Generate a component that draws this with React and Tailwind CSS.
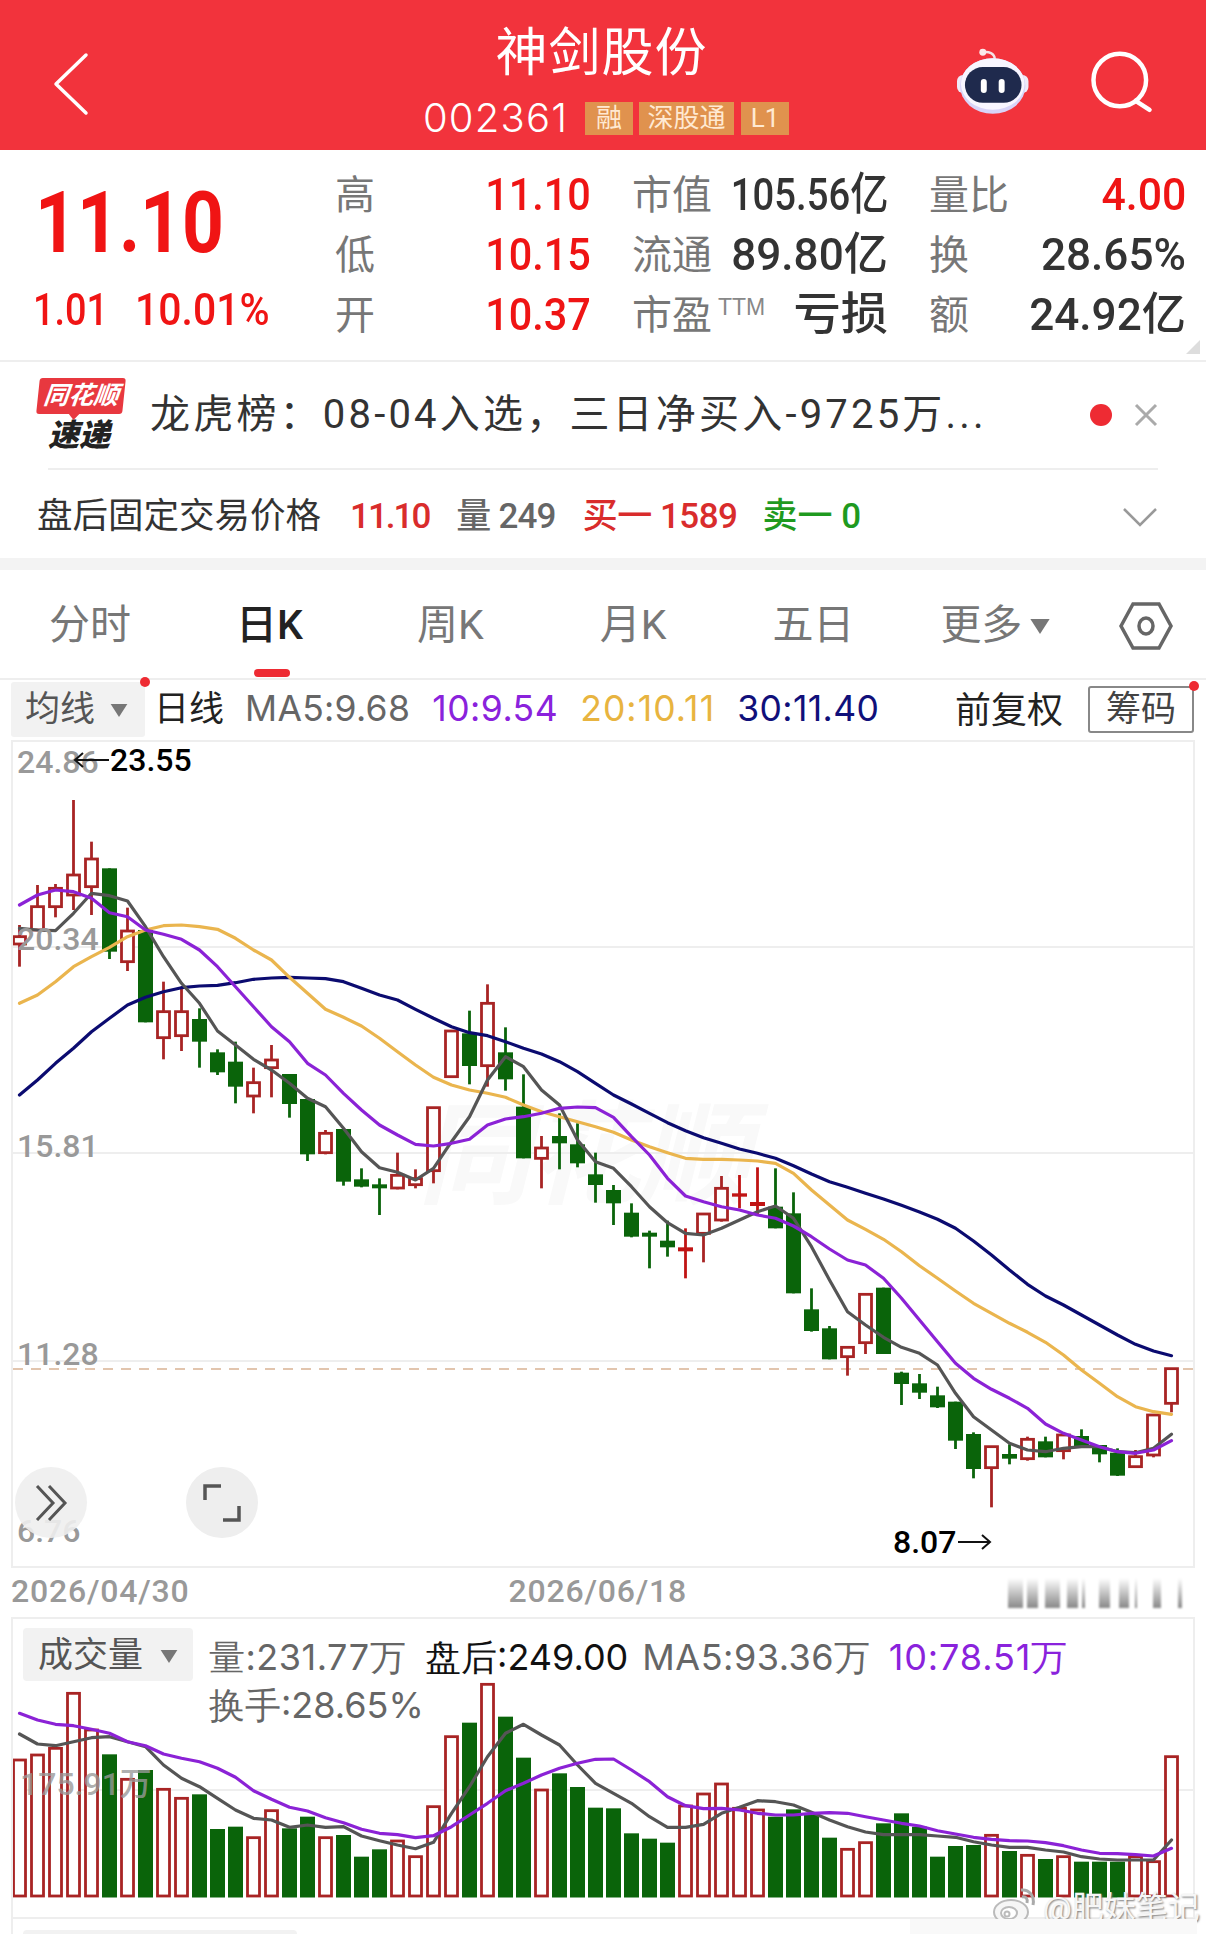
const CANDLES_A = [
  ['r', 555, 590, 612, 680], ['r', 435, 500, 570, 570], ['r', 432, 445, 500, 532], ['r', 180, 405, 465, 510],
  ['r', 305, 357, 440, 525], ['g', 385, 385, 635, 657], ['r', 503, 573, 665, 693], ['g', 570, 570, 847, 847],
  ['r', 725, 815, 893, 958], ['r', 740, 815, 887, 933], ['g', 805, 837, 905, 983], ['g', 928, 937, 997, 1005],
  ['g', 905, 965, 1040, 1090], ['r', 983, 1028, 1068, 1120], ['r', 915, 960, 983, 1072], ['g', 1002, 1002, 1092, 1133],
  ['g', 1077, 1077, 1243, 1263], ['r', 1170, 1180, 1238, 1243], ['g', 1167, 1167, 1325, 1337], ['g', 1285, 1318, 1340, 1342],
  ['g', 1315, 1333, 1345, 1425], ['r', 1238, 1306, 1344, 1348], ['r', 1288, 1316, 1334, 1345], ['r', 1103, 1103, 1292, 1330],
  ['r', 873, 873, 1010, 1010], ['g', 812, 880, 978, 1033], ['r', 733, 790, 977, 1040], ['g', 862, 937, 1018, 1052],
  ['g', 1003, 1100, 1255, 1255], ['r', 1188, 1224, 1255, 1345], ['g', 1120, 1188, 1210, 1288], ['g', 1150, 1213, 1270, 1282],
  ['g', 1238, 1303, 1335, 1388],
]

const CANDLES_B = [
  ['g', 255, 270, 310, 375], ['g', 310, 338, 410, 412], ['g', 392, 398, 410, 505], ['g', 362, 422, 442, 470],
  ['R', 385, 442, 454, 535], ['r', 342, 342, 400, 487], ['r', 228, 265, 360, 365], ['R', 225, 280, 290, 325],
  ['R', 202, 306, 318, 345], ['g', 205, 320, 385, 385], ['g', 277, 340, 580, 580], ['g', 565, 628, 693, 695],
  ['g', 678, 685, 778, 778], ['r', 742, 742, 770, 827], ['r', 583, 583, 728, 762], ['g', 563, 563, 762, 762],
  ['g', 815, 818, 852, 915], ['g', 822, 850, 878, 897], ['g', 860, 886, 922, 924], ['g', 905, 905, 1022, 1047],
  ['g', 997, 1002, 1107, 1135], ['r', 1040, 1040, 1103, 1222], ['g', 1033, 1062, 1076, 1093], ['r', 1010, 1018, 1076, 1082],
  ['g', 1010, 1024, 1072, 1072], ['r', 1005, 1005, 1052, 1078], ['g', 988, 1008, 1040, 1040], ['g', 1035, 1035, 1063, 1087],
  ['g', 1045, 1058, 1127, 1128], ['r', 1050, 1070, 1100, 1102], ['r', 945, 945, 1065, 1072], ['r', 806, 806, 910, 937],
]

const candles = [
  ...CANDLES_A.map(([c, ...v]) => [c, ...v.map((z) => 740 + z / 3)]),
  ...CANDLES_B.map(([c, ...v]) => [c, ...v.map((z) => 1100 + z / 3)]),
]

const priceLine = (a, b) => [...a.map((z) => 740 + z / 3), ...b.map((z) => 1100 + z / 3)]
const volLine = (a, b) => [...a.map((z) => 1440 + z / 3), ...b.map((z) => 1560 + z / 3)]

const MA5 = priceLine(
  [565, 570, 572, 520, 460, 467, 483, 560, 650, 730, 790, 873, 915, 958, 990, 1030, 1075, 1100, 1165, 1235, 1283, 1297, 1320, 1285, 1205, 1130, 1020, 950, 980, 1050, 1095, 1200, 1265],
  [205, 260, 320, 368, 400, 405, 385, 360, 335, 318, 355, 440, 540, 635, 675, 712, 742, 760, 795, 880, 950, 990, 1030, 1050, 1055, 1045, 1040, 1040, 1055, 1058, 1045, 1003],
)
const MA10 = priceLine(
  [495, 465, 450, 455, 475, 518, 530, 570, 583, 598, 630, 680, 740, 800, 860, 905, 970, 1005, 1060, 1110, 1155, 1185, 1213, 1218, 1210, 1198, 1155, 1137, 1130, 1120, 1105, 1101, 1103],
  [52, 110, 165, 235, 288, 305, 320, 330, 345, 355, 378, 410, 447, 480, 495, 535, 595, 660, 725, 790, 835, 868, 895, 925, 972, 1000, 1020, 1040, 1055, 1060, 1050, 1022],
)
const MA20 = priceLine(
  [790, 765, 725, 680, 650, 622, 590, 570, 557, 555, 560, 568, 595, 630, 660, 712, 760, 808, 832, 858, 895, 935, 975, 1012, 1035, 1050, 1060, 1072, 1095, 1115, 1130, 1145, 1160],
  [97, 120, 140, 158, 175, 178, 178, 180, 183, 190, 220, 270, 315, 360, 388, 418, 455, 497, 535, 573, 610, 640, 670, 697, 727, 765, 810, 850, 890, 920, 935, 943],
)
const MA30 = priceLine(
  [1065, 1020, 970, 925, 875, 835, 795, 772, 755, 743, 738, 736, 728, 718, 714, 712, 714, 716, 725, 745, 765, 780, 808, 835, 860, 878, 887, 905, 925, 942, 965, 995, 1030],
  [-15, 12, 40, 68, 92, 113, 130, 147, 160, 175, 197, 222, 245, 262, 280, 297, 316, 336, 358, 385, 423, 465, 510, 553, 588, 615, 645, 675, 705, 733, 753, 767],
)

const VOLS_A = [
  ['r', 960], ['r', 945], ['r', 925], ['r', 760], ['r', 870], ['g', 943], ['r', 1018], ['g', 990], ['r', 1048], ['r', 1075], ['g', 1063],
  ['g', 1167], ['g', 1160], ['r', 1193], ['r', 1112], ['g', 1165], ['g', 1130], ['r', 1193], ['g', 1185], ['g', 1250], ['g', 1228],
  ['r', 1203], ['r', 1250], ['r', 1100], ['r', 890], ['g', 848], ['r', 733], ['g', 830], ['g', 953], ['r', 1050], ['g', 1000], ['g', 1041], ['g', 1103],
]
const VOLS_B = [
  ['g', 745], ['g', 820], ['g', 836], ['g', 848], ['r', 738], ['r', 702], ['r', 672], ['r', 745], ['r', 750], ['g', 770], ['g', 748],
  ['g', 765], ['g', 833], ['r', 868], ['r', 848], ['g', 790], ['g', 760], ['g', 800], ['g', 890], ['g', 858], ['g', 855], ['r', 826],
  ['g', 873], ['r', 886], ['g', 897], ['r', 890], ['g', 905], ['g', 905], ['g', 905], ['r', 890], ['r', 905], ['r', 590],
]
const vols = [
  ...VOLS_A.map(([c, z]) => [c, 1440 + z / 3]),
  ...VOLS_B.map(([c, z]) => [c, 1560 + z / 3]),
]

const VOL_MA5 = volLine(
  [882, 912, 917, 905, 893, 890, 905, 920, 975, 1015, 1040, 1075, 1110, 1135, 1140, 1162, 1155, 1162, 1160, 1188, 1202, 1215, 1226, 1207, 1120, 1040, 950, 880, 853, 885, 915, 975, 1030],
  [700, 730, 770, 802, 802, 793, 760, 742, 722, 725, 735, 757, 780, 800, 816, 824, 824, 824, 828, 832, 845, 855, 862, 862, 870, 876, 890, 897, 900, 900, 900, 840],
)
const VOL_MA10 = volLine(
  [820, 840, 853, 857, 868, 880, 905, 917, 942, 955, 965, 985, 1012, 1052, 1078, 1102, 1113, 1133, 1148, 1168, 1180, 1184, 1193, 1187, 1160, 1125, 1090, 1052, 1030, 1005, 985, 970, 958],
  [597, 630, 665, 710, 737, 746, 745, 750, 760, 765, 765, 760, 758, 760, 770, 780, 790, 798, 812, 822, 832, 838, 842, 843, 848, 857, 870, 880, 881, 884, 888, 865],
)

const BLUR_BARS = [[1008, 15], [1027, 11], [1045, 15], [1067, 11], [1082, 3], [1099, 11], [1119, 10], [1135, 2], [1153, 8], [1178, 4]]

const cx = (i) => 19.5 + 18 * i
const pts = (ys) => ys.map((y, i) => `${cx(i)},${y.toFixed(1)}`).join(' ')

const RED = '#a82424'
const GREEN = '#0a640a'

function MaLine({ ys, color, width = 3.2 }) {
  return <polyline points={pts(ys)} fill="none" stroke={color} strokeWidth={width} strokeLinejoin="round" strokeLinecap="round" />
}

function Candle({ i, data }) {
  const [c, hi, top, bot, lo] = data
  const x = cx(i)
  const color = c === 'r' ? RED : c === 'R' ? '#c01414' : GREEN
  return (
    <g>
      <line x1={x} x2={x} y1={hi} y2={lo} stroke={color} strokeWidth="2.8" />
      {c === 'r' ? (
        <rect x={x - 6} y={top} width="12" height={bot - top} fill="#fff" stroke={color} strokeWidth="2.8" />
      ) : (
        <rect x={x - 7.5} y={top} width="15" height={bot - top} fill={color} />
      )}
    </g>
  )
}

function Caret({ className }) {
  return (
    <svg viewBox="0 0 18 14" className={className}>
      <path d="M0 0H18L9 14Z" fill="currentColor" />
    </svg>
  )
}

function Robot() {
  return (
    <svg width="74" height="68" viewBox="0 0 74 68">
      <path d="M27 4C33 3 39 5 39 11" fill="none" stroke="#f3e3e6" strokeWidth="2.5" />
      <circle cx="27" cy="4" r="3.5" fill="#fbe9ea" />
      <rect x="1" y="27" width="72" height="18" rx="6" fill="#efeaf8" />
      <ellipse cx="37" cy="38" rx="33" ry="28" fill="#d8d4f8" />
      <ellipse cx="37" cy="36" rx="32" ry="26" fill="#f8f6ff" />
      <rect x="9" y="19" width="57" height="36" rx="18" fill="#1f2a4d" />
      <rect x="25" y="31" width="6" height="14" rx="3" fill="#fff" />
      <rect x="43" y="31" width="6" height="14" rx="3" fill="#fff" />
    </svg>
  )
}

function Cell({ label, value, scale, red, labelExtra }) {
  return (
    <div className="flex items-center justify-between h-[60px] whitespace-nowrap">
      <span className="text-[40px] leading-[50px] text-[#777] flex items-start pt-[2px]">
        {label}
        {labelExtra && <span className="text-[23px] leading-[32px] ml-[6px] text-[#888] [font-family:'Liberation_Sans']">{labelExtra}</span>}
      </span>
      <span className={`text-[45px] font-medium origin-right ${scale} ${red ? 'text-[#ef1414]' : 'text-[#333]'}`}>{value}</span>
    </div>
  )
}

export default function App() {
  return (
    <div className="w-[1206px] h-[1934px] overflow-hidden bg-white font-['Roboto','Noto_Sans_CJK_SC',sans-serif]">
      {/* top bar */}
      <header className="h-[150px] bg-[#f2333c] flex items-start text-white">
        <div className="w-[250px] pl-[53px] pt-[52px]">
          <svg width="36" height="64" viewBox="0 0 36 64" fill="none" stroke="#fff" strokeWidth="3.5" strokeLinecap="round" strokeLinejoin="round">
            <path d="M33 3L3 32L33 61" />
          </svg>
        </div>
        <div className="flex-1 flex flex-col items-center pt-[20px] pl-[6px]">
          <div className="text-[52px] leading-[68px] tracking-[1px] pr-[9px]">神剑股份</div>
          <div className="flex items-center mt-[13px] h-[34px]">
            <span className="text-[40px] tracking-[1.2px] font-light mr-[17px] [font-family:'Inter']">002361</span>
            <span className="h-[33px] w-[48px] bg-[#e0924e] text-[26px] flex items-center justify-center text-[#ffe9d2]">融</span>
            <span className="h-[33px] w-[95px] ml-[6px] bg-[#e0924e] text-[26px] flex items-center justify-center text-[#ffe9d2]">深股通</span>
            <span className="h-[33px] w-[48px] ml-[7px] bg-[#e0924e] text-[26px] flex items-center justify-center text-[#ffe9d2]">L1</span>
          </div>
        </div>
        <div className="w-[250px] flex justify-end items-start pt-[48px] pr-[52px]">
          <Robot />
          <svg className="ml-[61px] mt-[3px]" width="64" height="62" viewBox="0 0 64 62" fill="none" stroke="#fff" strokeWidth="4.5" strokeLinecap="round">
            <circle cx="30" cy="29" r="26.5" />
            <path d="M46 50L60 59" />
          </svg>
        </div>
      </header>

      {/* quote */}
      <section className="relative h-[212px] border-b-2 border-[#eee] flex pt-[15px]">
        <div className="w-[335px] pl-[35px]">
          <div className="text-[86px] leading-[86px] mt-[15px] font-bold text-[#f01414] origin-left scale-x-[0.85]">11.10</div>
          <div className="flex text-[44px] leading-[44px] font-medium text-[#f01414] mt-[22px] ml-[-2px] pr-[20px] whitespace-nowrap">
            <span className="origin-left scale-x-[0.86] w-[102px]">1.01</span>
            <span className="origin-left scale-x-[0.93]">10.01%</span>
          </div>
        </div>
        <div className="grid grid-cols-[256px_256px_257px] gap-x-[41px] h-[180px]">
          <Cell label="高" value="11.10" scale="scale-x-[0.92]" red />
          <Cell label="市值" value="105.56亿" scale="scale-x-[0.85] -ml-[10px]" />
          <Cell label="量比" value="4.00" scale="scale-x-[0.95]" red />
          <Cell label="低" value="10.15" scale="scale-x-[0.92]" red />
          <Cell label="流通" value="89.80亿" scale="scale-x-[0.98]" />
          <Cell label="换" value="28.65%" scale="scale-x-[0.98]" />
          <Cell label="开" value="10.37" scale="scale-x-[0.92]" red />
          <Cell label="市盈" labelExtra="TTM" value="亏损" scale="scale-x-[1.05]" />
          <Cell label="额" value="24.92亿" scale="scale-x-[0.98]" />
        </div>
        <div className="absolute right-[6px] bottom-[6px] w-0 h-0 border-l-[14px] border-l-transparent border-b-[14px] border-b-[#ddd]" />
      </section>

      {/* news */}
      <section className="h-[106px] flex items-center pl-[37px] pr-[48px]">
        <div className="w-[88px] flex flex-col items-center">
          <div className="relative w-[86px] h-[36px] bg-[#e8383f] rounded-[3px] -skew-x-6 text-white text-[25px] leading-[36px] font-bold italic text-center">
            同花顺
            <div className="absolute left-[31px] top-[34px] w-0 h-0 border-l-[7px] border-l-transparent border-r-[7px] border-r-transparent border-t-[8px] border-t-[#e8383f]" />
          </div>
          <div className="text-[31px] leading-[34px] mt-[5px] font-black italic text-[#222] pr-[4px]">速递</div>
        </div>
        <div className="ml-[25px] text-[40px] tracking-[3.2px] text-[#333] whitespace-nowrap">龙虎榜：08-04入选，三日净买入-9725万...</div>
        <div className="ml-auto w-[22px] h-[22px] rounded-full bg-[#ee2b33]" />
        <svg className="ml-[22px]" width="24" height="24" viewBox="0 0 24 24" stroke="#aaa" strokeWidth="3" fill="none">
          <path d="M2 2L22 22M22 2L2 22" />
        </svg>
      </section>
      <div className="mx-[48px] h-[2px] bg-[#eee]" />

      <section className="h-[88px] flex items-center pl-[37px] pr-[49px] whitespace-nowrap text-[35px] pt-[6px]">
        <span className="text-[#333] text-[35.5px]">盘后固定交易价格</span>
        <span className="ml-[29px] text-[#d92c2c] font-medium tracking-[-2px]">11.10</span>
        <span className="ml-[27px] text-[#666] font-medium tracking-[-0.8px]">量 249</span>
        <span className="ml-[27px] text-[#d92c2c] font-medium tracking-[-0.5px]">买一 1589</span>
        <span className="ml-[25px] text-[#1f9a1f] font-medium">卖一 0</span>
        <svg className="ml-auto" width="34" height="20" viewBox="0 0 34 20" fill="none" stroke="#999" strokeWidth="2.5">
          <path d="M1 2L17 18L33 2" />
        </svg>
      </section>
      <div className="h-[12px] bg-[#f3f3f3]" />

      {/* period tabs */}
      <nav className="relative h-[110px] border-b-2 border-[#eee] flex items-center text-[41px] text-[#777] pt-[4px] whitespace-nowrap">
        <span className="ml-[49px]">分时</span>
        <span className="ml-[105px] text-[#222] font-medium">日K</span>
        <span className="ml-[114px]">周K</span>
        <span className="ml-[116px]">月K</span>
        <span className="ml-[106px]">五日</span>
        <span className="ml-[86px] flex items-center">更多<Caret className="w-[20px] h-[15px] ml-[8px] text-[#777]" /></span>
        <svg className="ml-[69px]" width="54" height="48" viewBox="0 0 54 48" fill="none" stroke="#666" strokeWidth="3.5">
          <path d="M2 24L14 2H40L52 24L40 46H14Z" />
          <ellipse cx="27" cy="24" rx="7" ry="8" />
        </svg>
        <div className="absolute left-[254px] bottom-[1px] w-[36px] h-[8px] rounded-full bg-[#ee2b33]" />
      </nav>

      {/* MA legend */}
      <section className="h-[58px] flex items-center whitespace-nowrap text-[35px] pl-[11px]">
        <div className="relative h-[55px] w-[134px] bg-[#f2f2f2] rounded-[3px] flex items-center pl-[14px] pt-[3px] text-[#555]">
          均线
          <Caret className="w-[18px] h-[13px] ml-[15px] text-[#777]" />
          <div className="absolute right-[-5px] top-[-5px] w-[10px] h-[10px] rounded-full bg-[#ee2b33]" />
        </div>
        <span className="ml-[9px] pt-[3px] text-[#222]">日线</span>
        <div className="flex [font-family:'Inter'] text-[35.5px] tracking-[0.3px]">
          <span className="ml-[21px] text-[#666]">MA5:9.68</span>
          <span className="ml-[22px] text-[#8a22dc] tracking-[0.5px]">10:9.54</span>
          <span className="ml-[22px] text-[#e8b440] tracking-[1.1px]">20:10.11</span>
          <span className="ml-[22px] text-[#10107a] tracking-[0.4px]">30:11.40</span>
        </div>
        <span className="ml-auto pt-[3px] text-[#222] text-[36px]">前复权</span>
        <div className="relative ml-[25px] mr-[12px] w-[106px] h-[47px] border-2 border-[#888] rounded-[3px] flex items-center justify-center pt-[3px] text-[#444]">
          筹码
          <div className="absolute right-[-7px] top-[-7px] w-[10px] h-[10px] rounded-full bg-[#ee2b33]" />
        </div>
      </section>

      {/* candlestick chart */}
      <section className="relative ml-[11px] mt-[2px] w-[1184px] h-[828px] border-2 border-[#eee]">
        <div className="absolute left-[405px] top-[355px] text-[112px] leading-[120px] font-bold italic text-[#f9f9f9] tracking-[-2px]">同花顺</div>
        <svg className="relative block" width="1180" height="824" viewBox="13 742 1180 824">
          <line x1="13" x2="1193" y1="947" y2="947" stroke="#eee" strokeWidth="2" />
          <line x1="13" x2="1193" y1="1153" y2="1153" stroke="#eee" strokeWidth="2" />
          <line x1="13" x2="1193" y1="1361" y2="1361" stroke="#eee" strokeWidth="2" />
          <line x1="13" x2="1193" y1="1369" y2="1369" stroke="#d9b394" strokeWidth="1.5" strokeDasharray="10 8" />
          {candles.map((d, i) => <Candle key={i} i={i} data={d} />)}
          <MaLine ys={MA30} color="#0b0b70" />
          <MaLine ys={MA20} color="#eab54e" />
          <MaLine ys={MA5} color="#555" />
          <MaLine ys={MA10} color="#8b22d6" />
        </svg>
        <span className="absolute left-[4px] top-[1px] text-[32px] leading-[38px] text-[#999] font-medium">24.86</span>
        <span className="absolute left-[4px] top-[178px] text-[32px] leading-[38px] text-[#999] font-medium">20.34</span>
        <span className="absolute left-[4px] top-[385px] text-[32px] leading-[38px] text-[#999] font-medium">15.81</span>
        <span className="absolute left-[4px] top-[593px] text-[32px] leading-[38px] text-[#999] font-medium">11.28</span>
        <span className="absolute left-[4px] top-[770px] text-[32px] leading-[38px] text-[#999] font-medium">6.76</span>
        <span className="absolute left-[60px] top-[-1px] flex items-center text-[32px] leading-[38px] text-black font-medium">
          <svg width="36" height="16" viewBox="0 0 36 16" fill="none" stroke="#111" strokeWidth="2"><path d="M36 8H2M10 1L2 8L10 15" /></svg>
          <span className="ml-[1px]">23.55</span>
        </span>
        <span className="absolute left-[880px] top-[781px] flex items-center text-[32px] leading-[38px] text-black font-medium">
          8.07
          <svg className="ml-[2px]" width="34" height="16" viewBox="0 0 34 16" fill="none" stroke="#111" strokeWidth="2"><path d="M0 8H32M24 1L32 8L24 15" /></svg>
        </span>
        <div className="absolute left-[2px] top-[725px] w-[72px] h-[71px] rounded-full bg-[#eee]/90 flex items-center justify-center">
          <svg width="36" height="36" viewBox="0 0 36 36" fill="none" stroke="#555" strokeWidth="3">
            <path d="M4 1L20 18L4 35M16 1L32 18L16 35" />
          </svg>
        </div>
        <div className="absolute left-[173px] top-[725px] w-[72px] h-[71px] rounded-full bg-[#eee] flex items-center justify-center">
          <svg width="38" height="38" viewBox="0 0 38 38" fill="none" stroke="#555" strokeWidth="3.5">
            <path d="M2 16V2H18M36 22V36H20" />
          </svg>
        </div>
      </section>

      {/* date axis */}
      <section className="h-[49px] flex items-center pl-[11px] pr-[21px] pb-[4px] text-[32px] text-[#999] font-medium tracking-[0.8px]">
        <span>2026/04/30</span>
        <span className="ml-[319px]">2026/06/18</span>
        <svg className="ml-auto mt-[4px] blur-[1px]" width="177" height="30" viewBox="1008 1572 177 30">
          <defs>
            <linearGradient id="blurBar" x1="0" x2="0" y1="0" y2="1">
              <stop offset="0" stopColor="#fff" />
              <stop offset="1" stopColor="#888" />
            </linearGradient>
          </defs>
          {BLUR_BARS.map(([x, w]) => <rect key={x} x={x} y="1572" width={w} height="30" fill="url(#blurBar)" />)}
        </svg>
      </section>

      {/* volume chart */}
      <section className="relative ml-[11px] w-[1184px] h-[302px] border-2 border-[#eee]">
        <svg className="block" width="1180" height="298" viewBox="13 1619 1180 298">
          <line x1="13" x2="1193" y1="1790" y2="1790" stroke="#eee" strokeWidth="2" />
          {vols.map(([c, y], i) =>
            c === 'r' ? (
              <rect key={i} x={cx(i) - 6} y={y} width="12" height={1896 - y} fill="#fff" stroke={RED} strokeWidth="2.8" />
            ) : (
              <rect key={i} x={cx(i) - 7.5} y={y} width="15" height={1897.5 - y} fill={GREEN} />
            ),
          )}
          <MaLine ys={VOL_MA5} color="#555" />
          <MaLine ys={VOL_MA10} color="#8b22d6" />
        </svg>
        <div className="absolute left-[10px] top-[9px] w-[170px] h-[53px] bg-[#f2f2f2] rounded-[4px] flex items-center pl-[15px] pt-[3px] text-[35px] text-[#555]">
          成交量
          <Caret className="w-[18px] h-[13px] ml-[17px] text-[#777]" />
        </div>
        <div className="absolute left-[196px] top-[16px] flex text-[36px] leading-[44px] tracking-[0.5px] whitespace-nowrap [font-family:'Inter']">
          <span className="text-[#666]">量:231.77万</span>
          <span className="ml-[19px] text-[#111] tracking-[0px]">盘后:249.00</span>
          <span className="ml-[14px] text-[#666]">MA5:93.36万</span>
          <span className="ml-[18px] text-[#8a22dc] tracking-[0.9px]">10:78.51万</span>
        </div>
        <div className="absolute left-[196px] top-[64px] text-[36px] leading-[44px] text-[#666] [font-family:'Inter']">换手:28.65%</div>
        <span className="absolute left-[7px] top-[146px] text-[32px] leading-[38px] text-[#999]/80 font-medium">175.91万</span>
        {/* weibo mark */}
        <div className="absolute left-[980px] top-[268px] flex items-center text-[32px] leading-[40px] whitespace-nowrap text-[#f6f6f6] [text-shadow:1px_1px_2px_#777]">
          <svg className="mr-[6px] mb-[4px]" width="44" height="38" viewBox="0 0 44 38" fill="none" stroke="#bbb" strokeWidth="2">
            <ellipse cx="18" cy="25" rx="17" ry="12" fill="#f6f6f6" />
            <ellipse cx="16" cy="26" rx="8" ry="6" fill="#fff" />
            <circle cx="14" cy="27" r="2.5" />
            <path d="M28 3C36 2 42 9 40 18M29 10C33 9 35 12 34 16" stroke="#aaa" strokeWidth="3" />
          </svg>
          @肥妹笔记
        </div>
      </section>

      {/* cut-off next panel */}
      <div className="relative h-[17px] ml-[11px] border-l-2 border-[#eee]">
        <div className="absolute left-[10px] top-[11px] w-[274px] h-[6px] bg-[#f2f2f2] rounded-t-[4px]" />
        <div className="absolute right-[9px] top-0 w-[287px] h-[17px] bg-[#f9f9f9]" />
      </div>
    </div>
  )
}
